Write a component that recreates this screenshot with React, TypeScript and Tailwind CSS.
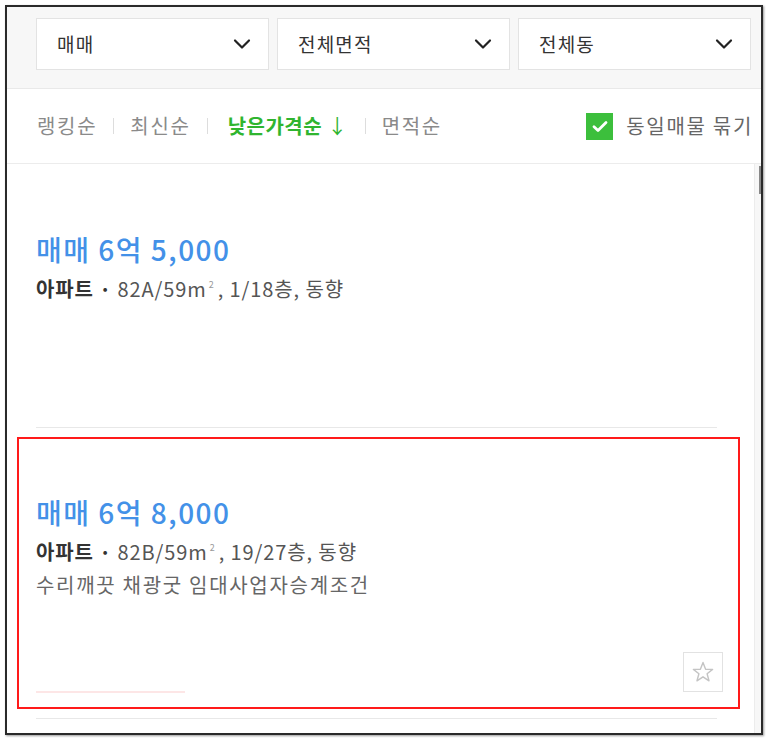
import React from 'react';

const FONT = "font-['Noto_Sans_CJK_KR','Noto_Sans',sans-serif]";

const Chevron: React.FC = () => (
  <svg width="20" height="12" viewBox="0 0 20 12" fill="none">
    <path d="M3 2.5 L10 9.5 L17 2.5" stroke="#222" strokeWidth="2.2" strokeLinecap="round" strokeLinejoin="round" />
  </svg>
);

const Select: React.FC<{ label: string }> = ({ label }) => (
  <div className="flex h-[52px] w-[233px] items-center justify-between border border-[#e3e3e3] bg-white pl-[20px] pr-[16px]">
    <span className="text-[19px] tracking-[1.2px] text-[#333]">{label}</span>
    <Chevron />
  </div>
);

const Divider: React.FC = () => <span className="mx-[16px] h-[16px] w-px bg-[#ddd]" />;

const StarIcon: React.FC = () => (
  <svg width="24" height="24" viewBox="0 0 24 24" fill="none">
    <path
      d="M12 2.5 L14.6 9.2 L21.6 9.4 L16.1 13.8 L18 20.8 L12 16.8 L6 20.8 L7.9 13.8 L2.4 9.4 L9.4 9.2 Z"
      stroke="#c4c4c4"
      strokeWidth="1.4"
      strokeLinejoin="round"
    />
  </svg>
);

type Listing = {
  price: string;
  area: string;
  floor: string;
  memo?: string;
};

const listings: Listing[] = [
  { price: '매매 6억 5,000', area: '82A/59m', floor: ', 1/18층, 동향' },
  { price: '매매 6억 8,000', area: '82B/59m', floor: ', 19/27층, 동향', memo: '수리깨끗 채광굿 임대사업자승계조건' },
];

const App: React.FC = () => {
  return (
    <div className={`${FONT} h-[743px] w-[771px] bg-white pl-[5px] pt-[5px]`}>
      <div className="relative flex h-[730px] w-[758px] flex-col overflow-hidden border-2 border-[#2a2a2a] shadow-[1px_1px_2px_rgba(0,0,0,0.4)]">
        {/* filters */}
        <div className="flex h-[82px] shrink-0 gap-[8px] border-b border-[#e9e9e9] bg-[#f7f7f7] pl-[29px] pt-[11px]">
          <Select label="매매" />
          <Select label="전체면적" />
          <Select label="전체동" />
        </div>

        {/* sort */}
        <div className="flex h-[75px] shrink-0 items-center border-b border-[#ececec] bg-white pl-[30px] pr-[8px] text-[20px] tracking-[1.7px] text-[#8a8a8a]">
          <span>랭킹순</span>
          <Divider />
          <span>최신순</span>
          <Divider />
          <span className="ml-[4px] mr-[1px] font-bold tracking-[0.5px] text-[#2fb52f]">
            낮은가격순 <span className="font-normal">↓</span>
          </span>
          <Divider />
          <span>면적순</span>
          <div className="ml-auto flex items-center gap-[13px]">
            <span className="flex h-[27px] w-[27px] items-center justify-center bg-[#3cbf3c]">
              <svg width="16" height="13" viewBox="0 0 16 13" fill="none">
                <path d="M2 6.8 L6 10.5 L14 2.5" stroke="#fff" strokeWidth="2.8" strokeLinecap="round" strokeLinejoin="round" />
              </svg>
            </span>
            <span className="whitespace-nowrap text-[#666]">동일매물 묶기</span>
          </div>
        </div>

        {/* list */}
        <div className="flex min-h-0 flex-1">
          <div className="flex-1">
            {listings.map((item, idx) => (
              <div key={idx} className="relative pl-[29px] pr-[37px]">
                <div className={`border-b border-[#e8e8e8] ${idx === 0 ? 'h-[264px] pt-[67px]' : 'h-[291px] pt-[66px]'}`}>
                  <div className="text-[28px] font-medium leading-[36px] tracking-[1.5px] text-[#4391e8]">{item.price}</div>
                  <div className="mt-[5px] h-[33px] text-[20px] leading-[33px] tracking-[0.9px] text-[#555]">
                    <span className="font-bold text-[#333]">아파트 · </span>
                    {item.area}
                    <span className="relative -top-[9px] ml-[2px] mr-[3px] text-[9px] leading-none text-[#999]">2</span>
                    {item.floor}
                  </div>
                  {item.memo && <div className="text-[20px] leading-[33px] tracking-[1.7px] text-[#666]">{item.memo}</div>}
                  {idx === 1 && (
                    <>
                      <div className="mt-[90px] h-[2px] w-[149px] bg-[#fde6e6]" />
                      <button className="absolute right-[31px] top-[224px] flex h-[40px] w-[40px] items-center justify-center border border-[#e2e2e2] bg-white">
                        <StarIcon />
                      </button>
                    </>
                  )}
                </div>
              </div>
            ))}
          </div>
          {/* scrollbar */}
          <div className="relative w-[7px] shrink-0 border-l border-[#ececec] bg-[#f7f7f7]">
            <div className="absolute right-0 top-[2px] h-[28px] w-[2px] bg-[#888]" />
          </div>
        </div>

        {/* annotation box */}
        <div className="pointer-events-none absolute left-[10px] top-[430px] h-[272px] w-[723px] border-2 border-[#ff1a1a]" />
      </div>
    </div>
  );
};

export default App;
